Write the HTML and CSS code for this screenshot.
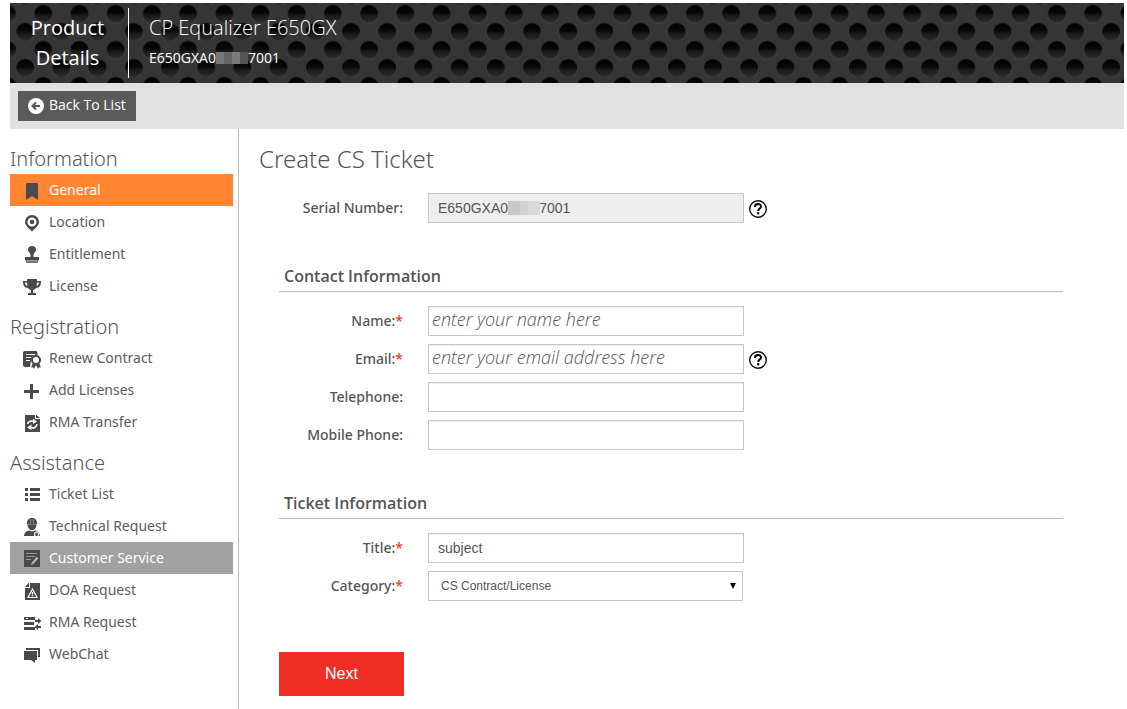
FILE: index.html
```html
<!DOCTYPE html>
<html lang="en">
<head>
  <meta charset="UTF-8">
  <title>Create CS Ticket</title>
  <link rel="stylesheet" href="styles.css">
</head>
<body>
  <header class="product">
    <svg class="mesh" width="100%" height="100%" aria-hidden="true">
      <defs>
        <linearGradient id="hole" x1="0" y1="0" x2="0" y2="1">
          <stop offset="0" stop-color="#000"/>
          <stop offset="0.45" stop-color="#080808"/>
          <stop offset="0.6" stop-color="#1a1a1a"/>
          <stop offset="1" stop-color="#2c2c2c"/>
        </linearGradient>
        <pattern id="holes" x="15.2" y="1.5" width="36.2" height="36" patternUnits="userSpaceOnUse">
          <rect width="37" height="36" fill="#353535"/>
          <g fill="#3f3f3f">
            <ellipse cx="18.1" cy="10" rx="9.6" ry="9.4"/>
            <ellipse cx="0" cy="28" rx="9.6" ry="9.4"/>
            <ellipse cx="36.2" cy="28" rx="9.6" ry="9.4"/>
          </g>
          <g fill="url(#hole)">
            <ellipse cx="18.1" cy="9.3" rx="9" ry="8.8"/>
            <ellipse cx="0" cy="27.3" rx="9" ry="8.8"/>
            <ellipse cx="36.2" cy="27.3" rx="9" ry="8.8"/>
          </g>
        </pattern>
      </defs>
      <rect width="100%" height="100%" fill="url(#holes)"/>
    </svg>
    <div class="product-label">Product<br>Details</div>
    <div class="product-info">
      <div class="product-name">CP Equalizer E650GX</div>
      <div class="product-serial">E650GXA0<span class="mask mask-dark"></span>7001</div>
    </div>
  </header>

  <div class="toolbar">
    <a class="back" href="#">
      <svg width="16" height="16" viewBox="0 0 16 16"><circle cx="8" cy="8" r="8" fill="#fff"/><path d="M12 8H5M8 4.5L4.5 8L8 11.5" fill="none" stroke="#555" stroke-width="2"/></svg>
      Back To List
    </a>
  </div>

  <div class="content">
    <nav class="sidebar">
      <h2>Information</h2>
      <ul>
        <li><a class="active" href="#"><svg class="icon" viewBox="0 0 20 20"><path d="M5 2h10q1 0 1 1v16l-6-4-6 4V3q0-1 1-1z"/></svg>General</a></li>
        <li><a href="#"><svg class="icon" viewBox="0 0 20 20"><path fill-rule="evenodd" d="M10 2a7 7 0 0 1 7 7c0 3.500-3.500 6-7 9.500C6.500 15 3 12.500 3 9a7 7 0 0 1 7-7zm0 2.500a4.500 4.500 0 1 0 0 9 4.500 4.500 0 0 0 0-9z"/><circle cx="10" cy="9" r="2.300"/></svg>Location</a></li>
        <li><a href="#"><svg class="icon" viewBox="0 0 20 20"><path d="M10 1a4 4 0 0 1 4 4c0 2-2.500 3-2.500 5v2H17v3H3v-3h5.500v-2C8.500 8 6 7 6 5a4 4 0 0 1 4-4z"/><path d="M3 15h14v1H3z" fill="#999"/><path d="M4 16h12v2H4z" fill="#777"/></svg>Entitlement</a></li>
        <li><a href="#"><svg class="icon" viewBox="0 0 20 20"><path fill-rule="evenodd" d="M5 2h10v2h4c0 5-1.500 6.500-5 7-1 1.500-2 2-3 2.300V16h3v2H6v-2h3v-2.700C8 13 7 12.500 6 11 2.500 10.500 1 9 1 4h4zM3 5.500c.2 2 .8 3 2.300 3.500L5 5.500zm14 0h-2L14.700 9c1.500-.5 2.100-1.500 2.300-3.500z"/></svg>License</a></li>
      </ul>
      <h2>Registration</h2>
      <ul>
        <li><a href="#"><svg class="icon" viewBox="0 0 20 20"><path d="M3 2h11q1.500 0 1.500 2v2A5.500 5.500 0 0 0 9 12l-1 6H3q-2 0-2-2V4q0-2 2-2z"/><path d="M4 5.500h9M4 8.500h5M4 11.500h4" stroke="#fff" stroke-width="1.200"/><path d="M11 14l-2 4.500 2-.3 1 1.800 2-4 2 4 1-1.800 2 .3-2-4.500z"/><circle cx="14" cy="11" r="4" fill="#fff" stroke="#4a4a4a" stroke-width="2"/></svg>Renew Contract</a></li>
        <li><a href="#"><svg class="icon" viewBox="0 0 20 20"><path d="M8 3h3v6h6v3h-6v6H8v-6H2V9h6z"/></svg>Add Licenses</a></li>
        <li><a href="#"><svg class="icon" viewBox="0 0 20 20"><path d="M3 2h10v4h5v13H3z"/><path d="M14 1.500l4 3.500h-4z"/><path d="M5.500 11c.5-2.500 3-3.500 6-2.500M15 11c-.5 3.500-3 4.500-6 3.500" stroke="#fff" stroke-width="1.600" fill="none"/><path d="M11 5.800l4 2.800-4 2.400zM9.500 11.500v5.500l-4.500-2.500z" fill="#fff"/></svg>RMA Transfer</a></li>
      </ul>
      <h2>Assistance</h2>
      <ul>
        <li><a href="#"><svg class="icon" viewBox="0 0 20 20"><path d="M3 3h3v3H3zM8 3h10v3H8zM3 8h3v3H3zM8 8h10v3H8zM3 13h3v3H3zM8 13h10v3H8z"/></svg>Ticket List</a></li>
        <li><a href="#"><svg class="icon" viewBox="0 0 20 20"><path d="M5 6c0-3 2-5 5-5s5 2 5 5l.5 1h-11z"/><path d="M5.500 7h9c0 4-2 6-4.500 6s-4.500-2-4.500-6zM2 19c0-3 2-5 5-5.500l3 1 3-1c3 .5 5 2.500 5 5.500z"/><path d="M8.500 2v4M11.500 2v4M6 7.200h8" stroke="#888"/><path d="M12 19.500l1-1.500c-1-2 0-3 1.500-3s3 1.500 1.500 4" fill="none" stroke="#fff" stroke-width="1.200"/></svg>Technical Request</a></li>
        <li><a class="current" href="#"><svg class="icon" viewBox="0 0 20 20"><path d="M2 1h16v17H2z"/><path d="M4 4.500h11M4 7.500h9M4 10.500h5" stroke="#999" stroke-width="1.200"/><path d="M15.500 8.500l-5 6" stroke="#bbb" stroke-width="2"/><path d="M9 16l.5-2 1.500 1.300z" fill="#bbb"/></svg>Customer Service</a></li>
        <li><a href="#"><svg class="icon" viewBox="0 0 20 20"><path d="M8 2h10v17H3V7h5z"/><path d="M7 1.500V6H3z"/><path d="M10.500 8l4.500 8.500H6z" fill="none" stroke="#fff" stroke-width="1.200"/><path d="M10.500 11v2.500M10.500 14.300v1" stroke="#fff" stroke-width="1.400"/></svg>DOA Request</a></li>
        <li><a href="#"><svg class="icon" viewBox="0 0 20 20"><path d="M2 4h11v3H2zM2 9h10v3H2zM2 14h11v3H2zM13 7h3V5l3.500 3-3.500 3V9h-3zM19 13h-3v-2l-3.500 3 3.500 3v-2h3z"/><path d="M4 5.500h2" stroke="#fff"/></svg>RMA Request</a></li>
        <li><a href="#"><svg class="icon" viewBox="0 0 20 20"><path d="M4 3h14v9h-2V5H4z"/><path d="M2 6h13v9h-2v3l-4-3H2z"/></svg>WebChat</a></li>
      </ul>
    </nav>

    <main class="main">
      <h1>Create CS Ticket</h1>
      <form class="ticket">
        <div class="row">
          <label for="serial">Serial Number:</label>
          <div class="serial-field">
            <input id="serial" type="text" value="E650GXA0&nbsp;&nbsp;&nbsp;&nbsp;&nbsp;&nbsp;&nbsp;&nbsp;7001" readonly>
            <span class="mask mask-light"></span>
          </div>
          <button class="help" type="button" aria-label="Serial number help"><svg width="20" height="20" viewBox="0 0 20 20"><circle cx="10" cy="10" r="8.300" fill="#fff" stroke="#111" stroke-width="1.400"/><path d="M7 8c0-4 6-4 6-.6 0 2.100-2.800 2.100-2.800 4.600" fill="none" stroke="#000" stroke-width="2"/><path d="M9.100 13.200h2.200v2.100H9.100z"/></svg></button>
        </div>

        <fieldset>
          <legend>Contact Information</legend>
          <div class="row">
            <label for="name">Name:<em>*</em></label>
            <input id="name" type="text" placeholder="enter your name here">
          </div>
          <div class="row">
            <label for="email">Email:<em>*</em></label>
            <input id="email" type="email" placeholder="enter your email address here">
            <button class="help" type="button" aria-label="Email help"><svg width="20" height="20" viewBox="0 0 20 20"><circle cx="10" cy="10" r="8.300" fill="#fff" stroke="#111" stroke-width="1.400"/><path d="M7 8c0-4 6-4 6-.6 0 2.100-2.800 2.100-2.800 4.600" fill="none" stroke="#000" stroke-width="2"/><path d="M9.100 13.200h2.200v2.100H9.100z"/></svg></button>
          </div>
          <div class="row">
            <label for="telephone">Telephone:</label>
            <input id="telephone" type="tel">
          </div>
          <div class="row">
            <label for="mobile">Mobile Phone:</label>
            <input id="mobile" type="tel">
          </div>
        </fieldset>

        <fieldset>
          <legend>Ticket Information</legend>
          <div class="row">
            <label for="title">Title:<em>*</em></label>
            <input id="title" type="text" value="subject">
          </div>
          <div class="row">
            <label for="category">Category:<em>*</em></label>
            <div class="select">
              <select id="category">
                <option>CS Contract/License</option>
              </select>
              <svg width="6" height="6" viewBox="0 0 6 6"><path d="M0 0h6L3 6z"/></svg>
            </div>
          </div>
        </fieldset>

        <button class="next" type="submit">Next</button>
      </form>
    </main>
  </div>
</body>
</html>
```
FILE: styles.css
```css
* {
  box-sizing: border-box;
}
body {
  margin: 0;
  padding: 3px 3px 0 10px;
  min-height: 100vh;
  display: flex;
  flex-direction: column;
  background: #fff;
  color: #555;
  font-family: "Open Sans", "Noto Sans", sans-serif;
  font-size: 14px;
}

/* product header */
.product {
  position: relative;
  display: flex;
  align-items: center;
  height: 80px;
  color: #fff;
  background: #353535;
}
.mesh {
  position: absolute;
  top: 0;
  left: 0;
}
.product-label {
  position: relative;
  width: 119px;
  height: 70px;
  padding: 5px 3px 0 0;
  border-right: 1px solid #fff;
  font-size: 20px;
  line-height: 30px;
  text-align: center;
}
.product-info {
  position: relative;
  height: 70px;
  padding: 5px 20px 0;
}
.product-name {
  font-size: 20px;
  font-weight: 300;
  line-height: 30px;
}
.product-serial {
  display: flex;
  align-items: center;
  line-height: 30px;
}
.mask {
  width: 32px;
  height: 12px;
}
.mask-dark {
  background: linear-gradient(90deg, #777 0 8px, #656565 8px 16px, #777c7e 16px 24px, #555 24px);
}
.mask-light {
  position: absolute;
  top: 8px;
  left: 80px;
  height: 14px;
  background: linear-gradient(90deg, #c8c8c8 0 12px, #d0d0d0 12px 20px, #dadada 20px);
}

/* toolbar */
.toolbar {
  display: flex;
  padding: 8px;
  background: #e1e1e1;
}
.back {
  display: flex;
  align-items: center;
  gap: 5px;
  height: 30px;
  padding: 0 10px 2px;
  background: #5a5a5a;
  color: #fff;
  line-height: 28px;
  text-decoration: none;
}
.back svg {
  margin-top: 2px;
}

.content {
  flex: 1;
  display: flex;
}

/* sidebar */
.sidebar {
  width: 229px;
  padding: 5px 5px 0 0;
  border-right: 1px solid #bbb;
}
.sidebar h2 {
  margin: 0;
  height: 40px;
  padding-top: 10px;
  font-family: "Noto Sans", sans-serif;
  font-size: 20px;
  font-weight: 300;
  line-height: 30px;
}
.sidebar ul {
  margin: 0;
  padding: 0;
  list-style: none;
}
.sidebar a {
  display: flex;
  align-items: center;
  gap: 7px;
  height: 32px;
  padding: 0 0 2px 12px;
  color: #5c5c5c;
  font-family: "Noto Sans", sans-serif;
  text-decoration: none;
}
.sidebar a.active {
  background: #ff8533;
  color: #fff;
}
.sidebar a.current {
  background: #a1a1a1;
  color: #fff;
}
.icon {
  width: 20px;
  height: 20px;
  margin-top: 4px;
  fill: #4a4a4a;
}

/* form */
.main {
  flex: 1;
  padding: 10px 61px 13px 20px;
}
h1 {
  margin: 0;
  font-family: "Noto Sans", sans-serif;
  font-size: 24px;
  font-weight: 300;
  line-height: 40px;
}
.ticket {
  padding: 14px 0 0 20px;
}
.row {
  display: flex;
  align-items: center;
  margin-bottom: 8px;
}
.row label {
  width: 124px;
  margin-right: 25px;
  padding-bottom: 2px;
  font-family: "Noto Sans", sans-serif;
  font-weight: 500;
  text-align: right;
}
.row em {
  color: #f03a2e;
  font-style: normal;
}
.row input,
.row select {
  width: 316px;
  height: 30px;
  padding: 0 9px;
  border: 1px solid #c6c6c6;
  border-radius: 0;
  background: #fff;
  color: #555;
  font-family: "Liberation Sans", Arial, sans-serif;
  font-size: 14px;
}
.row input {
  box-shadow: inset 0 1px 1px #eee;
}
.row input[readonly] {
  background: #eee;
}
.row input[placeholder] {
  padding: 0 3px;
}
.row input::placeholder {
  color: #555;
  font-family: "Open Sans", sans-serif;
  font-size: 18px;
  font-style: italic;
  font-weight: 300;
}
.serial-field {
  position: relative;
  display: flex;
}
.help {
  display: flex;
  margin-left: 4px;
  padding: 2px 0 0;
  border: 0;
  background: none;
}
.select {
  display: grid;
  align-items: center;
}
.select select,
.select svg {
  grid-area: 1 / 1;
}
.row select {
  width: 315px;
  padding: 0 12px;
  appearance: none;
  font-size: 12px;
}
.select svg {
  justify-self: end;
  margin-right: 7px;
  pointer-events: none;
}
fieldset {
  margin: 0;
  padding: 30px 0 0;
  border: 0;
}
legend {
  float: left;
  width: 100%;
  height: 31px;
  margin-bottom: 14px;
  padding: 0 5px;
  border-bottom: 1px solid #bbb;
  font-size: 16px;
  font-weight: 600;
  line-height: 30px;
}
legend + .row {
  clear: both;
}
.next {
  width: 125px;
  height: 44px;
  margin-top: 43px;
  border: 0;
  background: #f02e26;
  color: #fff;
  font-family: "Liberation Sans", Arial, sans-serif;
  font-size: 16px;
}
```
